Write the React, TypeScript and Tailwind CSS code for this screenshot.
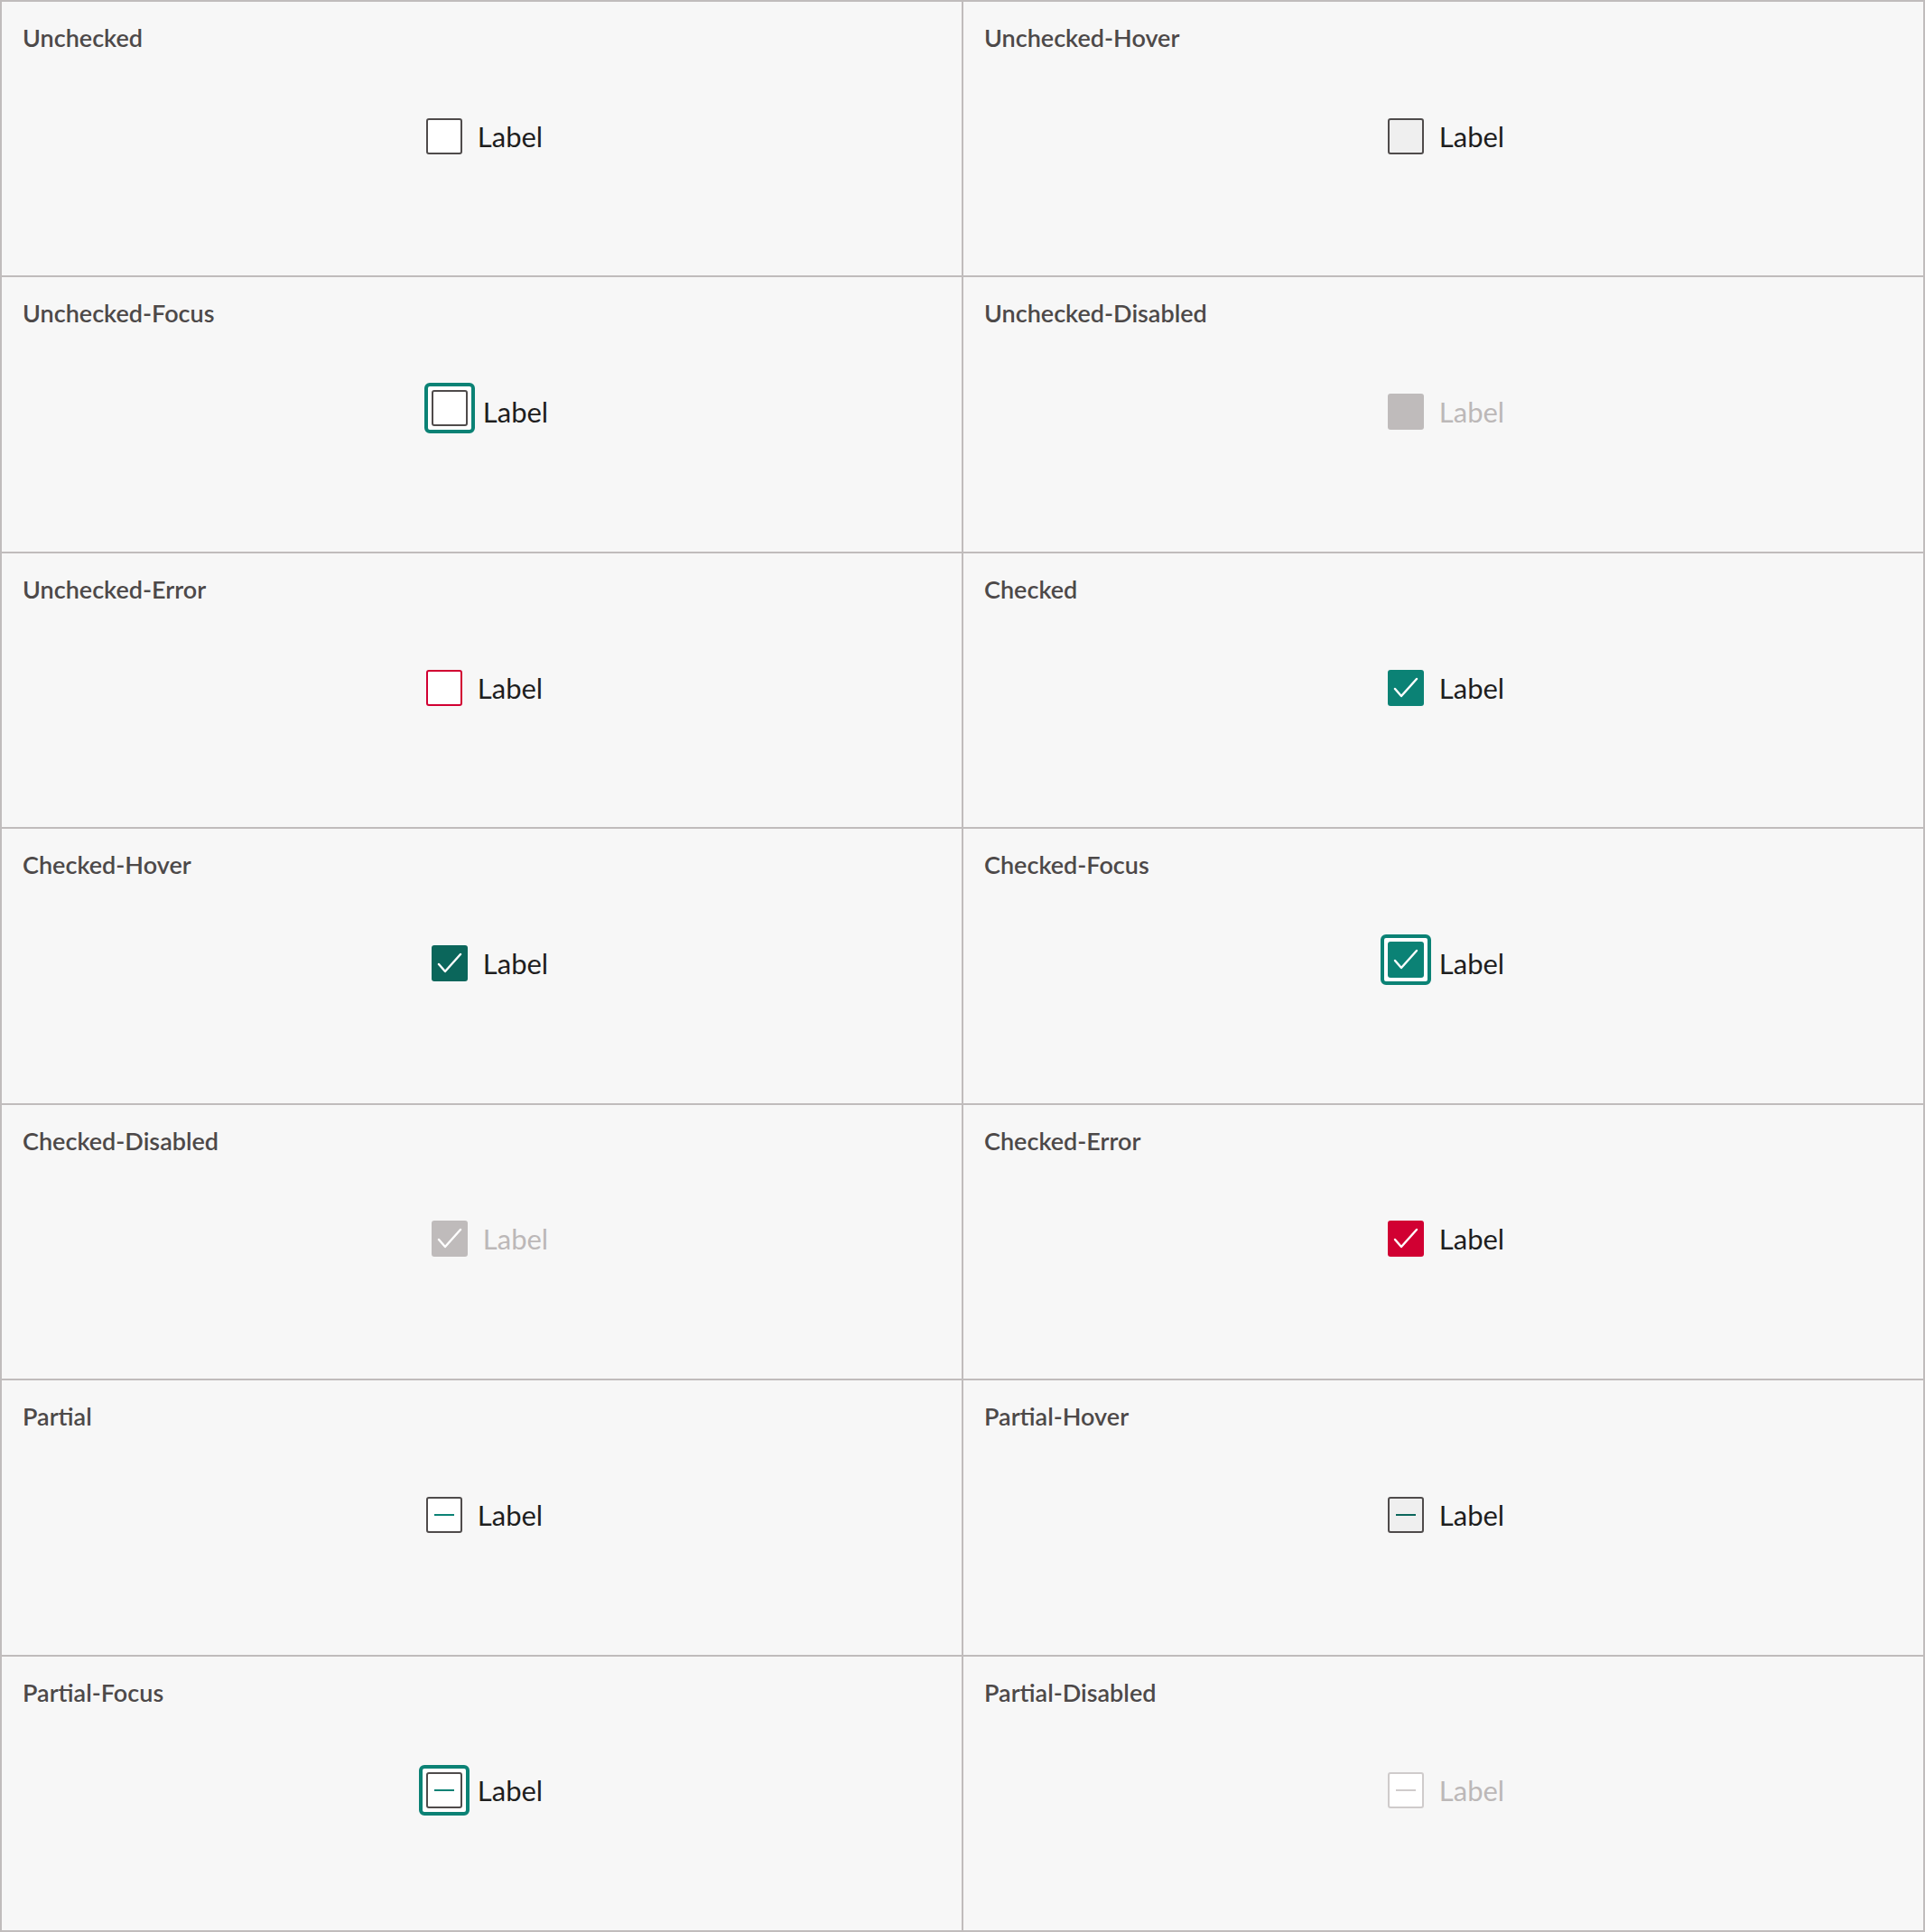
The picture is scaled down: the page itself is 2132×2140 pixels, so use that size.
import React from "react";

type Kind = "unchecked" | "checked" | "partial";
type Mode = "default" | "hover" | "focus" | "disabled" | "error";

interface Cell {
  title: string;
  kind: Kind;
  mode: Mode;
  nudge?: boolean;
  lift?: boolean;
}

const cells: Cell[] = [
  { title: "Unchecked", kind: "unchecked", mode: "default" },
  { title: "Unchecked-Hover", kind: "unchecked", mode: "hover" },
  { title: "Unchecked-Focus", kind: "unchecked", mode: "focus", nudge: true, lift: true },
  { title: "Unchecked-Disabled", kind: "unchecked", mode: "disabled" },
  { title: "Unchecked-Error", kind: "unchecked", mode: "error" },
  { title: "Checked", kind: "checked", mode: "default" },
  { title: "Checked-Hover", kind: "checked", mode: "hover", nudge: true },
  { title: "Checked-Focus", kind: "checked", mode: "focus", lift: true },
  { title: "Checked-Disabled", kind: "checked", mode: "disabled", nudge: true },
  { title: "Checked-Error", kind: "checked", mode: "error" },
  { title: "Partial", kind: "partial", mode: "default" },
  { title: "Partial-Hover", kind: "partial", mode: "hover" },
  { title: "Partial-Focus", kind: "partial", mode: "focus" },
  { title: "Partial-Disabled", kind: "partial", mode: "disabled" },
];

function boxClasses(kind: Kind, mode: Mode) {
  if (kind === "checked") {
    if (mode === "hover") return "bg-[#0b665b]";
    if (mode === "disabled") return "bg-[#bfbbbb]";
    if (mode === "error") return "bg-[#d10032]";
    return "bg-[#0b8275]";
  }
  if (mode === "hover") return "bg-[#efefef] border-2 border-[#4f4b4b]";
  if (mode === "disabled")
    return kind === "partial" ? "bg-white border-2 border-[#cfcbcb]" : "bg-[#bfbbbb]";
  if (mode === "error") return "bg-white border-2 border-[#d10032]";
  return "bg-white border-2 border-[#4f4b4b]";
}

function Box({ kind, mode, lift }: { kind: Kind; mode: Mode; lift?: boolean }) {
  const dash =
    mode === "disabled" ? "bg-[#cfcbcb]" : mode === "hover" ? "bg-[#0b665b]" : "bg-[#0b8275]";
  const box = (
    <span className={`flex h-[40px] w-[40px] shrink-0 items-center justify-center rounded-[3px] ${boxClasses(kind, mode)}`}>
      {kind === "checked" && (
        <svg width="40" height="40" viewBox="0 0 40 40" fill="none">
          <path d="M8 21 L15 29 L32 10" stroke="white" strokeWidth="2.4" strokeLinecap="round" strokeLinejoin="round" />
        </svg>
      )}
      {kind === "partial" && <span className={`h-[2px] w-[22px] ${dash}`} />}
    </span>
  );
  if (mode !== "focus") return box;
  // focus ring: drawn around the box without taking layout space
  return (
    <span
      className={`mx-[-8px] flex shrink-0 rounded-[6px] border-4 border-[#0b8275] bg-white p-[4px] ${
        lift ? "mt-[-12px] mb-[-4px]" : "my-[-8px]"
      }`}
    >
      {box}
    </span>
  );
}

function StateCell({ cell }: { cell: Cell }) {
  const disabled = cell.mode === "disabled";
  return (
    <div className="grid bg-[#f7f7f7] pb-[6px]">
      <div className="[grid-area:1/1] self-start justify-self-start pl-[23px] pt-[22px] text-[27px] font-semibold leading-[36px] text-[#4d4949]">
        {cell.title}
      </div>
      <label
        className={`[grid-area:1/1] flex items-center gap-[17px] self-center justify-self-center ${
          cell.nudge ? "ml-[18px]" : "ml-[6px]"
        }`}
      >
        <Box kind={cell.kind} mode={cell.mode} lift={cell.lift} />
        <span className={`text-[31px] leading-[40px] ${disabled ? "text-[#bcb8b8]" : "text-[#1e1e1e]"}`}>Label</span>
      </label>
    </div>
  );
}

export default function App() {
  return (
    <div className="min-h-screen bg-white" style={{ fontFamily: "Lato, 'Noto Sans', sans-serif" }}>
      <div className="grid h-[2140px] w-[2132px] grid-cols-2 grid-rows-7 gap-[2px] bg-[#c0bcbc] p-[2px]">
        {cells.map((c) => (
          <StateCell key={c.title} cell={c} />
        ))}
      </div>
    </div>
  );
}
